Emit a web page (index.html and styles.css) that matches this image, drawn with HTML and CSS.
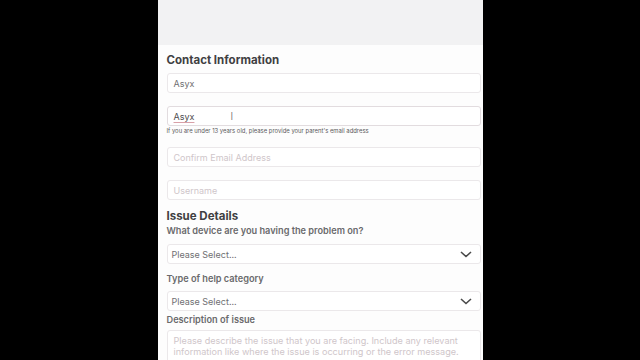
FILE: index.html
```html
<!DOCTYPE html>
<html lang="en">
  <head>
    <meta charset="UTF-8" />
    <meta name="viewport" content="width=device-width, initial-scale=1.0" />
    <title>Support Form</title>
    <link rel="stylesheet" href="styles.css">
  </head>
  <body>
    <div class="panel">
      <div class="top-bar"></div>
      <form class="form">
        <h2 class="section-title">Contact Information</h2>
        <div class="field field-first"><span class="value">Asyx</span></div>
        <div class="field field-active">
          <span class="value value-dark">Asyx</span>
          <span class="text-cursor">I</span>
        </div>
        <div class="hint">If you are under 13 years old, please provide your parent's email address</div>
        <div class="field field-after-hint"><span class="placeholder">Confirm Email Address</span></div>
        <div class="field"><span class="placeholder">Username</span></div>

        <h2 class="section-title issue-title">Issue Details</h2>
        <label class="label label-first">What device are you having the problem on?</label>
        <div class="field select">
          <span class="value">Please Select...</span>
          <svg class="chevron" width="12" height="7" viewBox="0 0 12 7">
            <path d="M1 1 L6 5.5 L11 1" fill="none" stroke="#4a4a4a" stroke-width="1.6" />
          </svg>
        </div>
        <label class="label">Type of help category</label>
        <div class="field select select-second">
          <span class="value">Please Select...</span>
          <svg class="chevron" width="12" height="7" viewBox="0 0 12 7">
            <path d="M1 1 L6 5.5 L11 1" fill="none" stroke="#4a4a4a" stroke-width="1.6" />
          </svg>
        </div>
        <label class="label label-desc">Description of issue</label>
        <div class="field textarea">
          <span class="placeholder">Please describe the issue that you are facing. Include any relevant information like where the issue is occurring or the error message.</span>
        </div>
      </form>
    </div>
  </body>
</html>
```

FILE: styles.css
```css
body {
  font-family: "Inter", "Noto Sans", sans-serif;
  background-color: #000;
  margin: 0;
  padding: 0;
}

.panel {
  width: 325px;
  height: 360px;
  margin: 0 auto;
  background-color: #fdfdfd;
  overflow: hidden;
}

.top-bar {
  height: 45px;
  background-color: #f2f2f3;
}

.form {
  display: flex;
  flex-direction: column;
  padding: 0 2px 0 9px;
}

.section-title {
  font-size: 11.5px;
  line-height: 14px;
  font-weight: 700;
  color: #404042;
  margin: 8px 0 0 0;
}

.issue-title {
  margin-top: 9px;
}

.field {
  position: relative;
  height: 20px;
  box-sizing: border-box;
  border: 1px solid #ebe8ea;
  border-radius: 3px;
  background-color: #fff;
  margin-top: 13px;
  padding: 0 6px;
  display: flex;
  align-items: center;
  font-size: 9px;
}

.field-first {
  margin-top: 6px;
}

.field-active {
  border-color: #e2dcdf;
}

.field-after-hint {
  margin-top: 13px;
}

.value {
  color: #6f6f72;
}

.value-dark {
  color: #4e4c4f;
  text-decoration: underline;
  text-decoration-color: #d9a0a8;
  text-underline-offset: 2px;
}

.placeholder {
  color: #cfc6ca;
}

.text-cursor {
  position: absolute;
  left: 63px;
  top: 3px;
  font-size: 10px;
  font-weight: 300;
  color: #666;
}

.hint {
  font-size: 5.9px;
  line-height: 7px;
  color: #5a5a5c;
  margin-top: 1px;
}

.label {
  font-size: 9.2px;
  line-height: 12px;
  font-weight: 600;
  color: #6a6a6c;
  margin-top: 9px;
}

.label-first {
  margin-top: 2px;
}

.label-desc {
  margin-top: 3px;
}

.select {
  justify-content: space-between;
  margin-top: 7px;
  padding-left: 4px;
  padding-right: 8px;
}

.select-second {
  margin-top: 6px;
}

.chevron {
  display: block;
}

.textarea {
  height: 40px;
  align-items: flex-start;
  margin-top: 4px;
  padding-top: 4px;
  line-height: 11px;
  font-size: 9.1px;
}
```
